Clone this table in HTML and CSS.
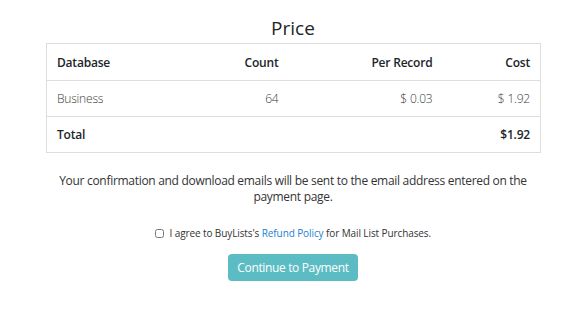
FILE: index.html
```html
<!DOCTYPE html>
<html lang="en">
<head>
    <meta charset="UTF-8">
    <meta name="viewport" content="width=device-width, initial-scale=1.0">
    <title>Price</title>
    <link rel="stylesheet" href="styles.css">
</head>
<body>
    <div class="price-wrapper">
        <h2>Price</h2>
        <table class="price-table">
            <colgroup>
                <col class="col-db">
                <col class="col-count">
                <col class="col-per">
                <col class="col-cost">
            </colgroup>
            <thead>
                <tr>
                    <th>Database</th>
                    <th class="num">Count</th>
                    <th class="num">Per Record</th>
                    <th class="num">Cost</th>
                </tr>
            </thead>
            <tbody>
                <tr>
                    <td>Business</td>
                    <td class="num">64</td>
                    <td class="num">$ 0.03</td>
                    <td class="num">$ 1.92</td>
                </tr>
                <tr class="total-row">
                    <td>Total</td>
                    <td></td>
                    <td></td>
                    <td class="num">$1.92</td>
                </tr>
            </tbody>
        </table>

        <p class="note">Your confirmation and download emails will be sent to the email address entered on the payment page.</p>

        <label class="agree">
            <input type="checkbox">
            I agree to BuyLists's <a href="#">Refund Policy</a> for Mail List Purchases.
        </label>

        <div class="btn-row">
            <button class="pay-btn">Continue to Payment</button>
        </div>
    </div>
</body>
</html>
```

FILE: styles.css
```css
body {
    margin: 0;
    background: #fff;
    font-family: 'Open Sans', 'Noto Sans', Arial, sans-serif;
    color: #212529;
}
.price-wrapper {
    width: 494px;
    margin: 0 auto;
    padding-top: 16px;
    text-align: center;
}
h2 {
    margin: 0 0 3px 0;
    font-size: 19px;
    font-weight: 400;
    line-height: 24px;
}
.price-table {
    width: 494px;
    table-layout: fixed;
    border-collapse: collapse;
    border: 1px solid #dedede;
    font-size: 12px;
    letter-spacing: -0.2px;
    text-align: left;
}
.col-db { width: 140px; }
.col-count { width: 102px; }
.col-per { width: 154px; }
.col-cost { width: 98px; }
.price-table th,
.price-table td {
    height: 35px;
    padding: 0 10px;
    border-top: 1px solid #dedede;
    vertical-align: middle;
}
.price-table th {
    height: 36px;
    font-weight: 600;
}
.price-table td {
    font-weight: 300;
    color: #3a3a3a;
}
.price-table .num {
    text-align: right;
}
.price-table .total-row td {
    font-weight: 600;
    color: #212529;
}
.note {
    margin: 20px auto 0 auto;
    max-width: 470px;
    font-size: 12px;
    letter-spacing: -0.3px;
    line-height: 16px;
    color: #333;
}
.agree {
    display: block;
    margin-top: 21px;
    font-size: 10px;
    letter-spacing: -0.1px;
    color: #333;
}
.agree input {
    width: 9px;
    height: 9px;
    margin: 0 3px 0 0;
    vertical-align: -1px;
}
.agree a {
    color: #1b7fd1;
    text-decoration: none;
}
.btn-row {
    margin-top: 14px;
}
.pay-btn {
    background: #5bbcc3;
    color: #fff;
    border: none;
    border-radius: 4px;
    width: 130px;
    height: 27px;
    padding: 0;
    white-space: nowrap;
    font-family: 'Open Sans', 'Noto Sans', Arial, sans-serif;
    font-size: 12px;
    letter-spacing: -0.35px;
    cursor: pointer;
}
```
